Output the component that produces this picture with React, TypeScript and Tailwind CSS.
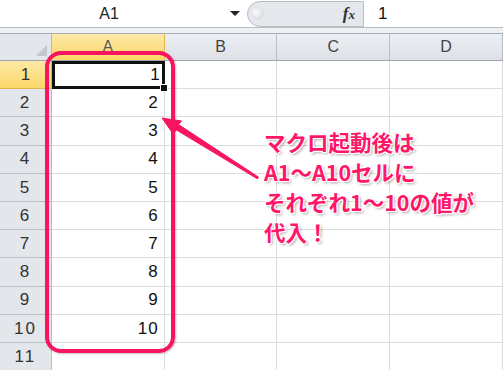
import React from "react";

const cols = ["A", "B", "C", "D"];
const rows = [1, 2, 3, 4, 5, 6, 7, 8, 9, 10, 11];

function FormulaBar() {
  return (
    <div className="flex h-[28px] items-center border-b border-[#b8bdc4] bg-white">
      <div className="flex h-full w-[222px] items-center justify-center pr-[4px] text-[16px] text-[#222]">A1</div>
      <div className="flex h-full w-[25px] items-center justify-center">
        <div className="h-0 w-0 border-x-[5px] border-t-[5px] border-x-transparent border-t-[#222]" />
      </div>
      <div className="flex h-[26px] w-[117px] items-center overflow-hidden rounded-l-[13px] border border-[#b9bdc3] bg-[#e4e7eb] pl-[3px] pr-[8px]">
        <div className="h-[13px] w-[13px] rounded-full bg-[radial-gradient(circle_at_40%_40%,#fdfdfd,#c9ccd1)]" />
        <div className="flex-1" />
        <span className="font-['Liberation_Serif',serif] text-[17px] font-bold italic text-[#333]">
          f<span className="text-[13px]">x</span>
        </span>
      </div>
      <div className="pl-[14px] text-[17px] text-[#111]">1</div>
    </div>
  );
}

function HeaderRow() {
  return (
    <div className="flex h-[27px] border-b border-[#9ea5ae]">
      <div className="relative w-[52px] border-r border-[#b3b9c1] bg-[#e3e7ec]">
        <div className="absolute bottom-[4px] right-[4px] h-0 w-0 border-b-[11px] border-l-[11px] border-b-[#c3c8ce] border-l-transparent" />
      </div>
      {cols.map((c) => (
        <div
          key={c}
          className={
            c === "A"
              ? "flex w-[113px] items-center justify-center border-r border-[#e0b74d] bg-[linear-gradient(#fde9a6,#fcd86a)] text-[16px] text-[#5a5a5a]"
              : "flex w-[113px] items-center justify-center border-r border-[#b8bec6] bg-[linear-gradient(#eceff3,#dde1e6)] text-[16px] text-[#444]"
          }
        >
          {c}
        </div>
      ))}
    </div>
  );
}

function Row({ n }: { n: number }) {
  const sel = n === 1;
  return (
    <div className="flex h-[28.2px]">
      <div
        className={
          sel
            ? "flex w-[52px] items-center justify-center border-b border-r border-[#e0b74d] bg-[linear-gradient(#fde9a6,#fcd86a)] text-[17px] text-[#333]"
            : "flex w-[52px] items-center justify-center border-b border-r border-[#b8bec6] bg-[#e3e7ec] text-[17px] tracking-[2px] text-[#333]"
        }
      >
        {n}
      </div>
      <div
        className={
          sel
            ? "relative flex w-[113px] items-center justify-end border-[3px] border-[#111] pr-[2px] text-[17px] text-[#111]"
            : "flex w-[113px] items-center justify-end border-b border-r border-[#dadcdf] pr-[5px] text-[17px] tracking-[1px] text-[#111]"
        }
      >
        {n <= 10 ? n : ""}
        {sel && <div className="absolute bottom-[-6px] right-[-6px] h-[8px] w-[8px] border border-white bg-[#111]" />}
      </div>
      {cols.slice(1).map((c) => (
        <div key={c} className="w-[113px] border-b border-r border-[#dadcdf]" />
      ))}
    </div>
  );
}

export default function App() {
  return (
    <div className="relative h-[370px] w-[503px] overflow-hidden bg-white font-['Liberation_Sans',Arial,sans-serif]">
      <FormulaBar />
      <div className="h-[6px] border-b border-[#a7adb5] bg-[#eef1f4]" />
      <HeaderRow />
      {rows.map((n) => (
        <Row key={n} n={n} />
      ))}

      <div className="absolute left-[45px] top-[51px] h-[302px] w-[130px] rounded-[16px] border-[4px] border-[#f8155f] shadow-[1px_1px_2px_rgba(0,0,0,0.25)]" />

      <svg className="absolute left-0 top-0" width="503" height="370" viewBox="0 0 503 370">
        <polygon
          points="162,118 181.5,121 178.5,124.5 258.6,177.2 257.4,178.8 176.5,130 173,133.8"
          fill="#f8155f"
          stroke="#f8155f"
          strokeWidth="1"
          strokeLinejoin="round"
        />
      </svg>

      <div className="absolute left-[264px] top-[127px] font-['Noto_Sans_CJK_JP','Noto_Sans',sans-serif] text-[21.5px] font-bold leading-[30px] text-[#ff1669] [text-shadow:-1px_-1px_0_#fff,1px_-1px_0_#fff,-1px_1px_0_#fff,1px_1px_0_#fff,2px_2px_3px_rgba(0,0,0,0.35)]">
        <div>マクロ起動後は</div>
        <div>A1～A10セルに</div>
        <div>それぞれ1～10の値が</div>
        <div>代入！</div>
      </div>
    </div>
  );
}
